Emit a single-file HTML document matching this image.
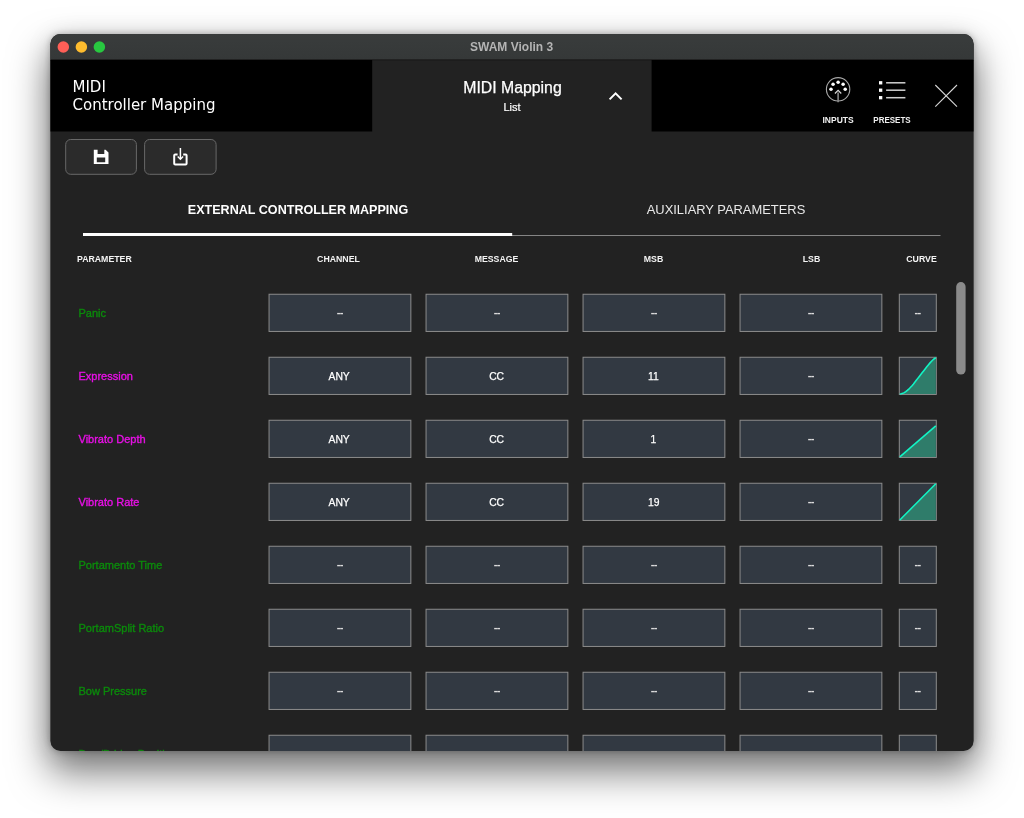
<!DOCTYPE html>
<html lang="en">
<head>
<meta charset="utf-8">
<title>SWAM Violin 3</title>
<style>
  html, body { margin: 0; padding: 0; }
  body {
    width: 1024px; height: 818px; overflow: hidden; position: relative;
    background: #ffffff;
    font-family: "Liberation Sans", sans-serif;
    color: #fff;
  }
  .abs { position: absolute; }
  #shadow {
    position: absolute; left: 50px; top: 34px; width: 924px; height: 717px;
    border-radius: 10.5px; background: rgba(0,0,0,.55);
    box-shadow: 0 0 6px rgba(0,0,0,.25), 0 3px 24px rgba(0,0,0,.13), 0 20px 38px 2px rgba(0,0,0,.50);
  }
  #win {
    position: absolute; left: 50px; top: 34px; width: 924px; height: 717px;
    overflow: hidden; will-change: transform;
  }
  #in { position: absolute; left: 0; top: 0; width: 924px; height: 717px; }
  #in div { position: absolute; white-space: nowrap; }
  .ctr { text-align: center; }
  .ttl { height: 26px; line-height: 26px; font-weight: bold; font-size: 12px; color: #b4b4b4; }
  .h1 { font-size: 16px; line-height: 18px; color: #fff; }
  .dv { font-family: "DejaVu Sans", "Liberation Sans", sans-serif; font-size: 15px; line-height: 18.2px; }
  .mm { transform: scaleX(.988); -webkit-text-stroke: 0.25px #fff; }
  .lst { font-size: 11px; line-height: 14px; -webkit-text-stroke: 0.2px #fff; }
  .lbl { font-size: 8.5px; font-weight: bold; color: #f0f0f0; line-height: 12px; }
  .tab { font-size: 13.5px; line-height: 16px; color: #e8e8e8; }
  .tab.b { font-weight: bold; color: #fff; }
  .ch { font-size: 9.5px; font-weight: bold; color: #f4f4f4; line-height: 14px; }
  .pn { left: 28.5px; font-size: 11px; line-height: 14px; -webkit-text-stroke: 0.35px; }
  .g { color: #0b8a0b; }
  .m { color: #e810e6; }
  .cell { width: 142.8px; height: 38.2px; text-align: center; font-size: 11px; line-height: 38.2px; color: #fff; }
  .cell span { display: inline-block; font-size: 11.5px; transform: translateX(-0.7px) scaleX(.90); -webkit-text-stroke: 0.25px #fff; }
  .cell.dash span { font-weight: bold; letter-spacing: -0.7px; font-size: 11px; -webkit-text-stroke: 0; transform: translate(-0.3px,-0.7px); color: #dcdcdc; }
  .cv { width: 38px; }
</style>
</head>
<body>
<div id="shadow"></div>
<div id="win"><div id="in">
  <svg class="abs" style="left:0;top:0" width="924" height="717" viewBox="0 0 924 717" fill="#323942" stroke="#8c8c8c" stroke-width="1">
<defs><clipPath id="wc"><rect x="0.5" y="0" width="923" height="717" rx="10" ry="10"/></clipPath><linearGradient id="tg" x1="0" y1="0" x2="0" y2="1"><stop offset="0" stop-color="#393c3c"/><stop offset="1" stop-color="#353838"/></linearGradient></defs><g clip-path="url(#wc)">
<rect x="0" y="0" width="924" height="717" fill="#222222" stroke="none"/><rect x="0" y="0" width="924" height="25.5" fill="url(#tg)" stroke="none"/><rect x="0" y="25.5" width="924" height="1" fill="#181818" stroke="none"/>
<rect x="0" y="26" width="322.20" height="71.50" fill="#000" stroke="none"/>
<rect x="601.6" y="26" width="322.40" height="71.50" fill="#000" stroke="none"/>
<circle cx="13.3" cy="13" r="5.75" fill="#fe5f57" stroke="none"/>
<circle cx="31.4" cy="13" r="5.75" fill="#febc2e" stroke="none"/>
<circle cx="49.4" cy="13" r="5.75" fill="#28c840" stroke="none"/>
<path d="M559.6 65.4 L565.6 59.4 L571.6 65.4" fill="none" stroke="#fff" stroke-width="2"/>
<circle cx="788.1" cy="55.3" r="11.7" fill="none" stroke="#a8a8a8" stroke-width="1.1"/>
<circle cx="781.0" cy="55.3" r="1.75" fill="#fff" stroke="none"/>
<circle cx="783.08" cy="50.28" r="1.75" fill="#fff" stroke="none"/>
<circle cx="788.1" cy="48.2" r="1.75" fill="#fff" stroke="none"/>
<circle cx="793.12" cy="50.28" r="1.75" fill="#fff" stroke="none"/>
<circle cx="795.2" cy="55.3" r="1.75" fill="#fff" stroke="none"/>
<path d="M788.1 58.5 V68.3" stroke="#8e8e8e" stroke-width="1.5" fill="none"/>
<path d="M784.9 59.5 L788.1 56.4 L791.3 59.5" stroke="#d8d8d8" stroke-width="1.2" fill="none"/>
<rect x="829" y="47.15" width="3.3" height="3.3" fill="#fff" stroke="none"/>
<rect x="836.1" y="48.05" width="19.3" height="1.5" fill="#d0d0d0" stroke="none"/>
<rect x="829" y="54.55" width="3.3" height="3.3" fill="#fff" stroke="none"/>
<rect x="836.1" y="55.45" width="19.3" height="1.5" fill="#d0d0d0" stroke="none"/>
<rect x="829" y="62.05" width="3.3" height="3.3" fill="#fff" stroke="none"/>
<rect x="836.1" y="62.95" width="19.3" height="1.5" fill="#d0d0d0" stroke="none"/>
<path d="M885.3 51 L907 72.6 M907 51 L885.3 72.6" stroke="#d4d4d4" stroke-width="1.1" fill="none"/>
<rect x="15.7" y="105.5" width="70.70" height="34.80" rx="5" fill="#2b2b2b" stroke="#686868" stroke-width="1"/>
<rect x="94.6" y="105.5" width="71.50" height="34.80" rx="5" fill="#2b2b2b" stroke="#686868" stroke-width="1"/>
<path d="M43.8 115.7 L55.6 115.7 L58.5 118.6 L58.5 130.0 L43.8 130.0 Z M47.6 115.7 L47.6 120.0 L54.3 120.0 L54.3 115.7 Z M46.8 123.6 L46.8 128.3 L55.2 128.3 L55.2 123.6 Z" fill="#fff" fill-rule="evenodd" stroke="none"/>
<path d="M127.6 120.5 H125.2 a1 1 0 0 0 -1 1 V129.5 a1 1 0 0 0 1 1 H135.6 a1 1 0 0 0 1 -1 V121.5 a1 1 0 0 0 -1 -1 H133.2" fill="none" stroke="#fff" stroke-width="2"/>
<path d="M130.4 114 V125" stroke="#fff" stroke-width="1.5" fill="none"/>
<path d="M127.7 122.5 L130.4 125.3 L133.1 122.5" stroke="#fff" stroke-width="1.4" fill="none"/>
<rect x="33" y="201" width="857.50" height="1" fill="#858585" stroke="none"/>
<rect x="33" y="199" width="429.20" height="3" fill="#fff" stroke="none"/>
<rect x="906.2" y="248" width="9.4" height="92.60" rx="4.7" fill="#8b8b8b" stroke="none"/>
<rect x="219.05" y="260.25" width="141.80" height="37.20"/>
<rect x="376.05" y="260.25" width="141.80" height="37.20"/>
<rect x="533.05" y="260.25" width="141.80" height="37.20"/>
<rect x="690.05" y="260.25" width="141.80" height="37.20"/>
<rect x="849.3" y="260.25" width="37.00" height="37.20"/>
<rect x="219.05" y="323.25" width="141.80" height="37.20"/>
<rect x="376.05" y="323.25" width="141.80" height="37.20"/>
<rect x="533.05" y="323.25" width="141.80" height="37.20"/>
<rect x="690.05" y="323.25" width="141.80" height="37.20"/>
<rect x="849.3" y="323.25" width="37.00" height="37.20"/>
<path d="M849.80 359.95 L851.30 359.77 L852.80 359.37 L854.30 358.63 L855.80 357.61 L857.30 356.43 L858.80 355.06 L860.30 353.55 L861.80 351.96 L863.30 350.21 L864.80 348.30 L866.30 346.33 L867.80 344.38 L869.30 342.46 L870.80 340.52 L872.30 338.58 L873.80 336.66 L875.30 334.72 L876.80 332.77 L878.30 330.89 L879.80 329.13 L881.30 327.47 L882.80 325.98 L884.30 324.75 L885.80 323.75 L885.80 359.95 Z" fill="#2f7c6a" stroke="none"/>
<path d="M849.80 359.95 L851.30 359.77 L852.80 359.37 L854.30 358.63 L855.80 357.61 L857.30 356.43 L858.80 355.06 L860.30 353.55 L861.80 351.96 L863.30 350.21 L864.80 348.30 L866.30 346.33 L867.80 344.38 L869.30 342.46 L870.80 340.52 L872.30 338.58 L873.80 336.66 L875.30 334.72 L876.80 332.77 L878.30 330.89 L879.80 329.13 L881.30 327.47 L882.80 325.98 L884.30 324.75 L885.80 323.75" fill="none" stroke="#12f4c4" stroke-width="1.6"/>
<rect x="219.05" y="386.25" width="141.80" height="37.20"/>
<rect x="376.05" y="386.25" width="141.80" height="37.20"/>
<rect x="533.05" y="386.25" width="141.80" height="37.20"/>
<rect x="690.05" y="386.25" width="141.80" height="37.20"/>
<rect x="849.3" y="386.25" width="37.00" height="37.20"/>
<path d="M849.80 422.95 L885.80 391.82 L885.80 422.95 Z" fill="#2f7c6a" stroke="none"/>
<path d="M849.80 422.95 L885.80 391.82" fill="none" stroke="#12f4c4" stroke-width="1.6"/>
<rect x="219.05" y="449.25" width="141.80" height="37.20"/>
<rect x="376.05" y="449.25" width="141.80" height="37.20"/>
<rect x="533.05" y="449.25" width="141.80" height="37.20"/>
<rect x="690.05" y="449.25" width="141.80" height="37.20"/>
<rect x="849.3" y="449.25" width="37.00" height="37.20"/>
<path d="M849.80 485.95 L885.80 449.75 L885.80 485.95 Z" fill="#2f7c6a" stroke="none"/>
<path d="M849.80 485.95 L885.80 449.75" fill="none" stroke="#12f4c4" stroke-width="1.6"/>
<rect x="219.05" y="512.25" width="141.80" height="37.20"/>
<rect x="376.05" y="512.25" width="141.80" height="37.20"/>
<rect x="533.05" y="512.25" width="141.80" height="37.20"/>
<rect x="690.05" y="512.25" width="141.80" height="37.20"/>
<rect x="849.3" y="512.25" width="37.00" height="37.20"/>
<rect x="219.05" y="575.25" width="141.80" height="37.20"/>
<rect x="376.05" y="575.25" width="141.80" height="37.20"/>
<rect x="533.05" y="575.25" width="141.80" height="37.20"/>
<rect x="690.05" y="575.25" width="141.80" height="37.20"/>
<rect x="849.3" y="575.25" width="37.00" height="37.20"/>
<rect x="219.05" y="638.25" width="141.80" height="37.20"/>
<rect x="376.05" y="638.25" width="141.80" height="37.20"/>
<rect x="533.05" y="638.25" width="141.80" height="37.20"/>
<rect x="690.05" y="638.25" width="141.80" height="37.20"/>
<rect x="849.3" y="638.25" width="37.00" height="37.20"/>
<rect x="219.05" y="701.25" width="141.80" height="37.20"/>
<rect x="376.05" y="701.25" width="141.80" height="37.20"/>
<rect x="533.05" y="701.25" width="141.80" height="37.20"/>
<rect x="690.05" y="701.25" width="141.80" height="37.20"/>
<rect x="849.3" y="701.25" width="37.00" height="37.20"/>
</g></svg>
  <div class="ttl ctr" style="left:311.6px;width:300px;top:0px;">SWAM Violin 3</div>
  <div class="h1 dv" style="left:22.5px;top:44px;">MIDI<br>Controller Mapping</div>
  <div class="h1 mm ctr" style="left:322.5px;width:279px;top:45px;">MIDI Mapping</div>
  <div class="lst ctr" style="left:322.5px;width:279px;top:66px;">List</div>
  <div class="lbl ctr" style="left:758.1px;width:60px;top:80px;">INPUTS</div>
  <div class="lbl ctr" style="left:812.2px;width:60px;top:80px;transform:scaleX(.94);">PRESETS</div>
  <div class="tab b ctr" style="left:32.7px;width:430px;top:167.5px;transform:scaleX(.931);">EXTERNAL CONTROLLER MAPPING</div>
  <div class="tab ctr" style="left:462.2px;width:428px;top:167.5px;transform:scaleX(.956);">AUXILIARY PARAMETERS</div>
  <div class="ch" style="left:27.2px;top:218px;transform:scaleX(.92);transform-origin:left center;">PARAMETER</div>
  <div class="ch ctr" style="left:216.8px;width:143px;top:218px;transform:scaleX(.92);">CHANNEL</div>
  <div class="ch ctr" style="left:374.5px;width:143px;top:218px;transform:scaleX(.92);">MESSAGE</div>
  <div class="ch ctr" style="left:531.8px;width:143px;top:218px;transform:scaleX(.92);">MSB</div>
  <div class="ch ctr" style="left:689.8px;width:143px;top:218px;transform:scaleX(.92);">LSB</div>
  <div class="ch ctr" style="left:800.3px;width:143px;top:218px;transform:scaleX(.92);">CURVE</div>
  <div class="pn g" style="top:272.0px">Panic</div>
  <div class="cell dash" style="left:218.55px;top:259.75px"><span>--</span></div>
  <div class="cell dash" style="left:375.55px;top:259.75px"><span>--</span></div>
  <div class="cell dash" style="left:532.55px;top:259.75px"><span>--</span></div>
  <div class="cell dash" style="left:689.55px;top:259.75px"><span>--</span></div>
  <div class="cell cv dash" style="left:848.8px;top:259.75px"><span>--</span></div>
  <div class="pn m" style="top:335.0px">Expression</div>
  <div class="cell" style="left:218.55px;top:322.75px"><span>ANY</span></div>
  <div class="cell" style="left:375.55px;top:322.75px"><span>CC</span></div>
  <div class="cell" style="left:532.55px;top:322.75px"><span>11</span></div>
  <div class="cell dash" style="left:689.55px;top:322.75px"><span>--</span></div>
  <div class="pn m" style="top:398.0px">Vibrato Depth</div>
  <div class="cell" style="left:218.55px;top:385.75px"><span>ANY</span></div>
  <div class="cell" style="left:375.55px;top:385.75px"><span>CC</span></div>
  <div class="cell" style="left:532.55px;top:385.75px"><span>1</span></div>
  <div class="cell dash" style="left:689.55px;top:385.75px"><span>--</span></div>
  <div class="pn m" style="top:461.0px">Vibrato Rate</div>
  <div class="cell" style="left:218.55px;top:448.75px"><span>ANY</span></div>
  <div class="cell" style="left:375.55px;top:448.75px"><span>CC</span></div>
  <div class="cell" style="left:532.55px;top:448.75px"><span>19</span></div>
  <div class="cell dash" style="left:689.55px;top:448.75px"><span>--</span></div>
  <div class="pn g" style="top:524.0px">Portamento Time</div>
  <div class="cell dash" style="left:218.55px;top:511.75px"><span>--</span></div>
  <div class="cell dash" style="left:375.55px;top:511.75px"><span>--</span></div>
  <div class="cell dash" style="left:532.55px;top:511.75px"><span>--</span></div>
  <div class="cell dash" style="left:689.55px;top:511.75px"><span>--</span></div>
  <div class="cell cv dash" style="left:848.8px;top:511.75px"><span>--</span></div>
  <div class="pn g" style="top:587.0px">PortamSplit Ratio</div>
  <div class="cell dash" style="left:218.55px;top:574.75px"><span>--</span></div>
  <div class="cell dash" style="left:375.55px;top:574.75px"><span>--</span></div>
  <div class="cell dash" style="left:532.55px;top:574.75px"><span>--</span></div>
  <div class="cell dash" style="left:689.55px;top:574.75px"><span>--</span></div>
  <div class="cell cv dash" style="left:848.8px;top:574.75px"><span>--</span></div>
  <div class="pn g" style="top:650.0px">Bow Pressure</div>
  <div class="cell dash" style="left:218.55px;top:637.75px"><span>--</span></div>
  <div class="cell dash" style="left:375.55px;top:637.75px"><span>--</span></div>
  <div class="cell dash" style="left:532.55px;top:637.75px"><span>--</span></div>
  <div class="cell dash" style="left:689.55px;top:637.75px"><span>--</span></div>
  <div class="cell cv dash" style="left:848.8px;top:637.75px"><span>--</span></div>
  <div class="pn g" style="top:713.0px">Bow/Bridge Position</div>
  <div class="cell dash" style="left:218.55px;top:700.75px"><span>--</span></div>
  <div class="cell dash" style="left:375.55px;top:700.75px"><span>--</span></div>
  <div class="cell dash" style="left:532.55px;top:700.75px"><span>--</span></div>
  <div class="cell dash" style="left:689.55px;top:700.75px"><span>--</span></div>
  <div class="cell cv dash" style="left:848.8px;top:700.75px"><span>--</span></div>
</div></div>
</body>
</html>
